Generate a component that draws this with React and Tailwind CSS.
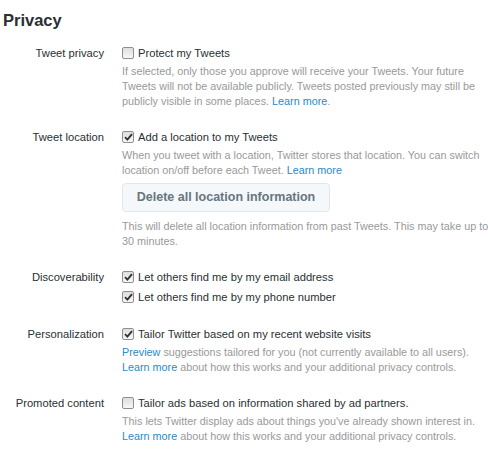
import React from 'react';

// Checkbox drawn like the old Windows control in the reference
function Box({ checked }) {
  return (
    <span className="mt-[3px] flex h-[12px] w-[12px] shrink-0 items-center justify-center rounded-[2px] border border-[#8e8f8f] bg-gradient-to-b from-[#dedede] to-[#f8f8f8]">
      {checked && (
        <svg width="9" height="8" viewBox="0 0 9 8">
          <path d="M1 4.2 L3.4 6.6 L8 1.2" fill="none" stroke="#333" strokeWidth="1.9" />
        </svg>
      )}
    </span>
  );
}

function Check({ checked, children }) {
  return (
    <div className="flex gap-[4px] leading-[18px] text-[11.2px] text-[#292f33]">
      <Box checked={checked} />
      <span>{children}</span>
    </div>
  );
}

// lines are broken by hand so they match the reference exactly
function Desc({ lines, className = '' }) {
  return (
    <div className={'mt-[2px] text-[10.8px] leading-[15px] text-[#999] ' + className}>
      {lines.map((l, i) => (
        <div key={i} className="whitespace-nowrap">
          {l}
        </div>
      ))}
    </div>
  );
}

function A({ children }) {
  return <a className="text-[#2a8ac6]">{children}</a>;
}

function Row({ label, children }) {
  return (
    <div className="flex gap-[18px]">
      <div className="w-[104px] shrink-0 text-right text-[11.2px] leading-[18px] text-[#292f33]">
        {label}
      </div>
      <div className="w-[362px]">{children}</div>
    </div>
  );
}

export default function App() {
  return (
    <div className="h-[460px] w-[488px] bg-white font-['Liberation_Sans',Arial,sans-serif]">
      <h1 className="ml-[3px] pt-[10px] text-[16.5px] font-bold leading-[20px] text-[#292f33]">
        Privacy
      </h1>

      <div className="mt-[14px] flex flex-col gap-[19px]">
        <Row label="Tweet privacy">
          <Check>Protect my Tweets</Check>
          <Desc
            lines={[
              'If selected, only those you approve will receive your Tweets. Your future',
              'Tweets will not be available publicly. Tweets posted previously may still be',
              <>publicly visible in some places. <A>Learn more</A>.</>,
            ]}
          />
        </Row>

        <Row label="Tweet location">
          <Check checked>Add a location to my Tweets</Check>
          <Desc
            lines={[
              'When you tweet with a location, Twitter stores that location. You can switch',
              <>location on/off before each Tweet. <A>Learn more</A></>,
            ]}
          />
          <button className="mt-[5px] h-[29px] w-[208px] rounded-[4px] border border-[#e1e8ed] bg-[#f5f8fa] text-[12.5px] font-bold text-[#66757f]">
            Delete all location information
          </button>
          <Desc
            className="mt-[7px]"
            lines={[
              'This will delete all location information from past Tweets. This may take up to',
              '30 minutes.',
            ]}
          />
        </Row>

        <Row label="Discoverability">
          <div className="flex flex-col gap-[2px]">
            <Check checked>Let others find me by my email address</Check>
            <Check checked>Let others find me by my phone number</Check>
          </div>
        </Row>

        <Row label="Personalization">
          <Check checked>Tailor Twitter based on my recent website visits</Check>
          <Desc
            lines={[
              <><A>Preview</A> suggestions tailored for you (not currently available to all users).</>,
              <><A>Learn more</A> about how this works and your additional privacy controls.</>,
            ]}
          />
        </Row>

        <Row label="Promoted content">
          <Check>Tailor ads based on information shared by ad partners.</Check>
          <Desc
            lines={[
              "This lets Twitter display ads about things you've already shown interest in.",
              <><A>Learn more</A> about how this works and your additional privacy controls.</>,
            ]}
          />
        </Row>
      </div>
    </div>
  );
}
